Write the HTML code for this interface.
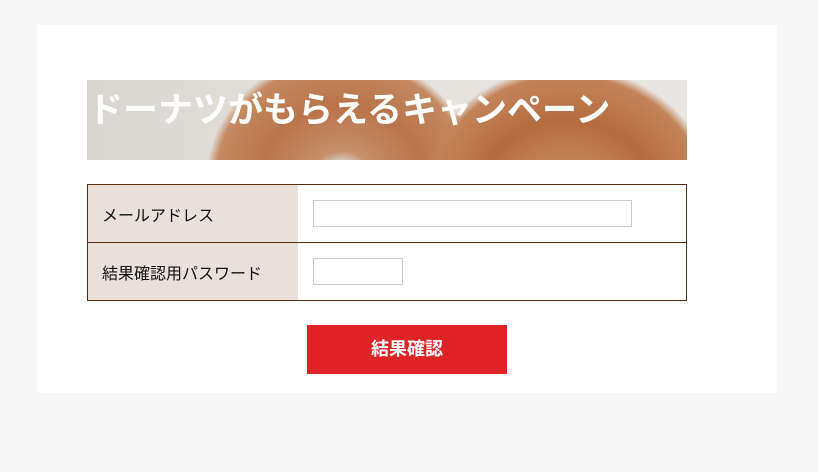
<!DOCTYPE html>
<html><head><meta charset="utf-8"><style>
body{margin:0;background:#f7f7f7;width:818px;height:472px;overflow:hidden;font-family:"Liberation Sans","Noto Sans CJK JP",sans-serif}
.card{position:absolute;left:37px;top:25px;width:740px;height:368px;background:#fff}
.banner{position:absolute;left:87px;top:80px;width:600px;height:80px;overflow:hidden;
background:linear-gradient(90deg,#d9d6d2 0%,#e4e1dd 40%,#e8e6e3 100%)}
.d{position:absolute;border-radius:50%}
.banner h1{position:absolute;left:1px;top:2px;margin:0;color:#fff;font-size:35px;font-weight:bold;letter-spacing:0;white-space:nowrap}
table{position:absolute;left:87px;top:184px;width:600px;border-collapse:collapse;border:1px solid #5a2d0c}
td{border:1px solid #5a2d0c;height:57px;padding:0;font-size:16px;color:#111}
td.l{background:#e9e0db;width:196px;padding-left:14px;border-right:none}
td.r{border-left:none;padding-left:15px}
.in{border:1px solid #ccc;height:25px;background:#fff}
.btn{position:absolute;left:307px;top:325px;width:200px;height:49px;background:#df2326;color:#fff;font-weight:bold;font-size:18px;text-align:center;line-height:49px}
</style></head><body>
<div class="card"></div>
<div class="banner">
<div class="d" style="left:120px;top:-25px;width:270px;height:200px;background:radial-gradient(ellipse at 50% 62%,#d8cbc0 0 10%,#c5906a 16%,#b8744a 42%,#c48a62 66%,rgba(210,170,140,0) 71%)"></div>
<div class="d" style="left:330px;top:-15px;width:300px;height:200px;background:radial-gradient(ellipse at 50% 68%,#d8c8ba 0 8%,#c48a5e 14%,#b46c40 42%,#c28459 65%,rgba(210,170,140,0) 70%)"></div>
<h1>ドーナツがもらえるキャンペーン</h1>
</div>
<table>
<tr><td class="l">メールアドレス</td><td class="r"><div class="in" style="width:317px"></div></td></tr>
<tr><td class="l">結果確認用パスワード</td><td class="r"><div class="in" style="width:88px"></div></td></tr>
</table>
<div class="btn">結果確認</div>
</body></html>
